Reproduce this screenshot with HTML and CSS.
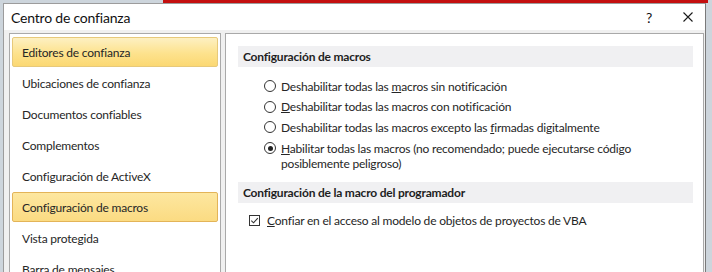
FILE: index.html
```html
<!DOCTYPE html>
<html lang="es">
<head>
  <meta charset="UTF-8">
  <meta name="viewport" content="width=device-width, initial-scale=1.0">
  <title>Centro de confianza</title>
  <link rel="stylesheet" href="styles.css">
</head>
<body>
  <div class="dialog">
    <div class="title-bar">
      <span class="title">Centro de confianza</span>
      <span class="title-buttons">
        <span class="help">?</span>
        <svg class="close" width="10" height="10" viewBox="0 0 10 10">
          <path d="M0.5 0.5 L9.5 9.5 M9.5 0.5 L0.5 9.5" stroke="#1a1a1a" stroke-width="1.1" fill="none"/>
        </svg>
      </span>
    </div>

    <div class="dialog-body">
      <!-- Menú lateral -->
      <div class="side-menu">
        <div class="menu-item selected">Editores de confianza</div>
        <div class="menu-item">Ubicaciones de confianza</div>
        <div class="menu-item">Documentos confiables</div>
        <div class="menu-item">Complementos</div>
        <div class="menu-item">Configuración de ActiveX</div>
        <div class="menu-item active">Configuración de macros</div>
        <div class="menu-item">Vista protegida</div>
        <div class="menu-item">Barra de mensajes</div>
      </div>

      <!-- Panel de opciones -->
      <div class="content">
        <div class="section-header">Configuración de macros</div>
        <div class="option-list">
          <label class="option"><span class="radio"></span><span>Deshabilitar todas las <u>m</u>acros sin notificación</span></label>
          <label class="option"><span class="radio"></span><span><u>D</u>eshabilitar todas las macros con notificación</span></label>
          <label class="option"><span class="radio"></span><span>Deshabilitar todas las macros excepto las <u>f</u>irmadas digitalmente</span></label>
          <label class="option"><span class="radio checked"></span><span><u>H</u>abilitar todas las macros (no recomendado; puede ejecutarse código<br>posiblemente peligroso)</span></label>
        </div>

        <div class="section-header">Configuración de la macro del programador</div>
        <label class="check-option">
          <svg class="checkbox" width="11" height="11" viewBox="0 0 11 11">
            <rect x="0.5" y="0.5" width="10" height="10" fill="#fff" stroke="#333"/>
            <path d="M2.3 5.6 L4.5 7.8 L8.8 3.2" stroke="#333" stroke-width="1.1" fill="none"/>
          </svg>
          <span><u>C</u>onfiar en el acceso al modelo de objetos de proyectos de VBA</span>
        </label>
      </div>
    </div>
  </div>
</body>
</html>
```

FILE: styles.css
```css
body {
  margin: 0;
  height: 272px;
  overflow: hidden;
  font-family: Lato, "Noto Sans", sans-serif;
  font-size: 12px;
  letter-spacing: -0.2px;
  color: #262626;
  background: linear-gradient(#c40f0f, #c40f0f) 163px 0 / 545px 3px no-repeat, #cdd5dc;
}

.dialog {
  margin: 3px 0 0 3px;
  width: 701px;
  height: 300px;
  border: 1px solid #9c9c9c;
  border-right-color: #7a7a7a;
  background-color: #f0f0f0;
}

.title-bar {
  height: 26px;
  background-color: #fff;
  display: flex;
  align-items: center;
  justify-content: space-between;
}

.title {
  font-size: 14px;
  margin-left: 7px;
  color: #111;
}

.title-buttons {
  display: flex;
  align-items: center;
  gap: 31px;
  margin-right: 12px;
}

.help {
  font-size: 14px;
  color: #111;
}

.dialog-body {
  display: flex;
  gap: 4px;
  padding: 3px 1px 0 5px;
}

.side-menu {
  width: 212px;
  height: 260px;
  overflow: hidden;
  background-color: #fff;
  border: 1px solid #a9a9a9;
  padding: 3px 2px;
  box-sizing: border-box;
  display: flex;
  flex-direction: column;
  gap: 1px;
}

.menu-item {
  flex: none;
  height: 30px;
  box-sizing: border-box;
  line-height: 26px;
  padding: 2px 0 0 9px;
  border: 1px solid transparent;
  border-radius: 2px;
  white-space: nowrap;
}

.menu-item.selected {
  background: linear-gradient(#fdf0c2, #fde28d 55%, #fbd873);
  border-color: #e7c97a;
}

.menu-item.active {
  background: linear-gradient(#fde7a0, #fbdb82);
  border-color: #e3b458;
}

.content {
  flex: 1;
  height: 260px;
  background-color: #fff;
  border: 1px solid #a9a9a9;
  box-sizing: border-box;
  padding: 12px 10px 0 12px;
}

.section-header {
  height: 21px;
  line-height: 21px;
  padding-left: 5px;
  background-color: #f0f0f2;
  font-weight: bold;
  color: #1e1e1e;
}

.option-list {
  display: flex;
  flex-direction: column;
  gap: 5.7px;
  margin: 11.5px 0 11px 26px;
}

.option {
  display: flex;
  align-items: flex-start;
  gap: 5px;
  line-height: 15px;
}

.radio {
  flex: none;
  width: 12px;
  height: 12px;
  margin-top: 1.5px;
  border: 1px solid #333;
  border-radius: 50%;
  box-sizing: border-box;
  background-color: #fff;
  position: relative;
}

.radio.checked::after {
  content: "";
  position: absolute;
  left: 2.5px;
  top: 2.5px;
  width: 5px;
  height: 5px;
  border-radius: 50%;
  background-color: #222;
}

.check-option {
  display: flex;
  align-items: center;
  gap: 7px;
  line-height: 15px;
  margin: 10.5px 0 0 11px;
}

.checkbox {
  flex: none;
}
```
